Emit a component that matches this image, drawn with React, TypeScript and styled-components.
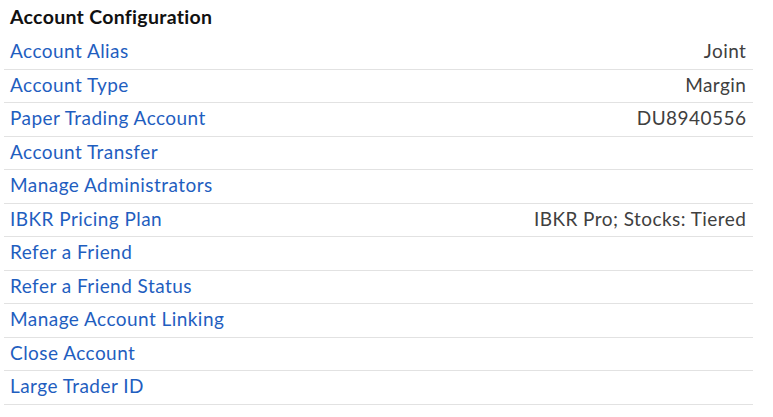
import styled, { createGlobalStyle } from "styled-components"

const GlobalStyle = createGlobalStyle`
  body {
    margin: 0;
    background: #ffffff;
    font-family: Lato, "Liberation Sans", sans-serif;
  }
`

const Panel = styled.section`
  width: 749px;
  padding: 0 0 0 4px;
`

const Title = styled.h3`
  margin: 0;
  height: 36px;
  box-sizing: border-box;
  padding: 0 6px 3px;
  display: flex;
  align-items: center;
  font-size: 19.5px;
  font-weight: 700;
  letter-spacing: 0.3px;
  color: #111111;
`

const Row = styled.div`
  display: flex;
  align-items: center;
  justify-content: space-between;
  height: 33.5px;
  box-sizing: border-box;
  padding: 0 7px 3px 6px;
  border-bottom: 1px solid #e2e2e2;
  font-size: 19px;
  letter-spacing: 0.45px;
`

const Label = styled.a`
  color: #1f5ebf;
  text-decoration: none;
  cursor: pointer;
`

const Value = styled.span`
  color: #404040;
  margin-right: -0.4px;
`

const rows: { label: string; value?: string }[] = [
  { label: "Account Alias", value: "Joint" },
  { label: "Account Type", value: "Margin" },
  { label: "Paper Trading Account", value: "DU8940556" },
  { label: "Account Transfer" },
  { label: "Manage Administrators" },
  { label: "IBKR Pricing Plan", value: "IBKR Pro; Stocks: Tiered" },
  { label: "Refer a Friend" },
  { label: "Refer a Friend Status" },
  { label: "Manage Account Linking" },
  { label: "Close Account" },
  { label: "Large Trader ID" },
]

export default function App() {
  return (
    <>
      <GlobalStyle />
      <Panel>
        <Title>Account Configuration</Title>
        {rows.map((r) => (
          <Row key={r.label}>
            <Label>{r.label}</Label>
            {r.value && <Value>{r.value}</Value>}
          </Row>
        ))}
      </Panel>
    </>
  )
}
